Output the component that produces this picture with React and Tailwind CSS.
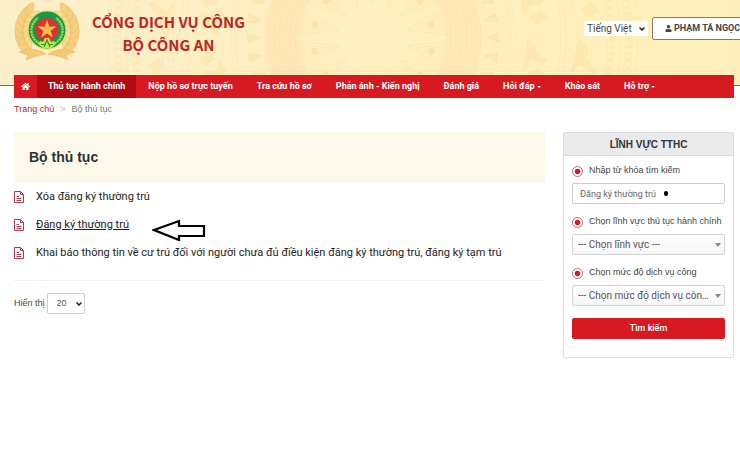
import { FaHome, FaUser } from "react-icons/fa";

const navItems = [
  { label: "Thủ tục hành chính", active: true },
  { label: "Nộp hồ sơ trực tuyến" },
  { label: "Tra cứu hồ sơ" },
  { label: "Phản ánh - Kiến nghị" },
  { label: "Đánh giá" },
  { label: "Hỏi đáp", menu: true },
  { label: "Khảo sát" },
  { label: "Hỗ trợ", menu: true },
];

const procedures = [
  { title: "Xóa đăng ký thường trú" },
  { title: "Đăng ký thường trú", current: true },
  { title: "Khai báo thông tin về cư trú đối với người chưa đủ điều kiện đăng ký thường trú, đăng ký tạm trú" },
];

const rays = Array.from({ length: 14 }, (_, i) => (i * 360) / 14 + 360 / 28);
const birds = Array.from({ length: 18 }, (_, i) => i * 20 + 6);
const feathers = Array.from({ length: 40 }, (_, i) => i * 9);
const leaves = [0, 1, 2, 3, 4, 5, 6];

// Bronze drum pattern behind the header
function DrumPattern() {
  return (
    <svg
      className="absolute inset-0 h-full w-full"
      viewBox="0 0 740 85"
      preserveAspectRatio="xMidYMid slice"
      fill="none"
      aria-hidden="true"
    >
      <g transform="translate(373 38)" stroke="#f6d392" strokeOpacity="0.3">
        <circle r="91" stroke="#fee3ad" strokeOpacity="0.6" strokeWidth="34" />
        {[74, 78, 83, 88, 94, 99, 104, 108].map((r) => (
          <circle key={r} r={r} strokeWidth="0.6" />
        ))}
        {rays.map((a) => (
          <g key={a} transform={`rotate(${a})`}>
            <path d="M35 0 L72 -13 V13 Z" strokeWidth="0.9" />
            <path d="M44 0 L70 -9 V9 Z M52 0 L67 -6 V6 Z" strokeWidth="0.8" />
            <circle cx="60" r="3" fill="#f6d392" fillOpacity="0.4" />
          </g>
        ))}
        {feathers.map((a) => (
          <path key={a} d="M113 0 l12 -5 1 9 z" transform={`rotate(${a})`} fill="#fbdc9c" fillOpacity="0.4" />
        ))}
        {[138, 142, 188, 193, 235, 241, 247, 253, 259, 265].map((r) => (
          <circle key={r} r={r} strokeWidth="0.7" />
        ))}
        {birds.map((a) => (
          <g key={a} transform={`rotate(${a})`} fill="#fbdc9c" fillOpacity="0.35" strokeWidth="0.6">
            <path d="M154 -14 q10 2 9 12 l12 6 -4 4 -11 -3 -6 9 -3 -8 4 -9 z" />
            <path d="M205 -20 q14 8 8 18 l14 12 -5 3 -13 -9 -8 10 1 -15 z" />
            <path d="M158 18 l12 -4 4 8 -10 5 z" />
            <path d="M210 22 l10 -4 5 10 -12 4 z" />
          </g>
        ))}
        <circle r="256" strokeWidth="3" strokeDasharray="3 4" />
        <circle r="238" strokeWidth="3" strokeDasharray="3 4" />
      </g>
    </svg>
  );
}

function Emblem() {
  const branch = (
    <g stroke="#e8b65f" strokeWidth="0.5">
      <path d="M24 53 C6 46 4 28 12 12" fill="none" stroke="#efc272" strokeWidth="4" />
      {leaves.map((i) => (
        <g key={i} transform={`rotate(${i * 14 - 42} 33 29) translate(7 29)`}>
          <path d="M1 2 C-7 -1 -7 -7 -3 -12 C2 -8 4 -4 1 2Z" fill="#f6cf7e" />
          <path d="M2 2 C2 -5 5 -9 8 -10 C9 -4 7 0 2 2Z" fill="#f8dc98" />
        </g>
      ))}
      <path d="M5 50 C14 45 24 47 32 52 L22 54 L12 58 L14 53 Z" fill="#f4c974" />
    </g>
  );
  return (
    <svg viewBox="0 0 66 60" className="h-[60px] w-[66px] shrink-0 overflow-visible" role="img" aria-label="Bộ Công An">
      {branch}
      <g transform="translate(66 0) scale(-1 1)">{branch}</g>
      <circle cx="33" cy="28" r="19" fill="#149a4c" stroke="#eddc45" strokeWidth="1.2" />
      <path d="M28 42.5 A14.8 14.8 0 0 1 24 16 M38 42.5 A14.8 14.8 0 0 0 42 16" fill="none" stroke="#b5d54a" strokeWidth="2.4" strokeDasharray="2 0.7" />
      <circle cx="33" cy="27.5" r="11.5" fill="#e03030" />
      <path d="M33 18 L35.3 24.6 H42.3 L36.7 28.7 L38.8 35.5 L33 31.4 L27.2 35.5 L29.3 28.7 L23.7 24.6 H30.7Z" fill="#f9c04a" />
      <path d="M25 43 L26 39 L29 40 L31 36 H35 L37 40 L40 39 L41 43 L37 46 H29Z" fill="#d8e23d" />
      <path d="M30 45 L33 38 L36 45 M27 42.5 H31 M35 42.5 H39" fill="none" stroke="#169c4c" strokeWidth="1.2" />
    </svg>
  );
}

function FileIcon() {
  return (
    <svg viewBox="0 0 10 12" className="h-3 w-[10px] shrink-0" fill="none" stroke="#b03a48" aria-hidden="true">
      <path d="M0.5 0.5 H6.5 L9.5 3.5 V11.5 H0.5 Z M6.5 0.5 V3.5 H9.5" />
      <path d="M2.5 5.5 H5 M2.5 7.5 H7.5 M2.5 9.5 H7.5" />
    </svg>
  );
}

function Chevron({ className }) {
  return (
    <svg viewBox="0 0 6 4" className={`pointer-events-none h-1 w-[6px] ${className}`} fill="none" stroke="#222" strokeWidth="1.5" aria-hidden="true">
      <path d="M0.5 0.5 L3 3 L5.5 0.5" />
    </svg>
  );
}

function FieldLabel({ htmlFor, children }) {
  return (
    <label htmlFor={htmlFor} className="flex h-5 items-center gap-[6px] text-[9px] whitespace-nowrap text-[#444]">
      <svg viewBox="0 0 11 11" className="h-[11px] w-[11px] shrink-0" aria-hidden="true">
        <circle cx="5.5" cy="5.5" r="5" fill="#fff" stroke="#c9545c" strokeWidth="0.9" />
        <circle cx="5.5" cy="5.5" r="2.7" fill="#cb1c25" />
      </svg>
      {children}
    </label>
  );
}

function SearchSelect({ id, text }) {
  return (
    <div className="grid items-center">
      <select
        id={id}
        className="col-start-1 row-start-1 h-[21px] w-full appearance-none truncate rounded-[2px] border border-[#d3d3d3] bg-linear-to-b from-white to-[#f6f6f6] pr-3 pl-[5px] font-['Roboto',sans-serif] text-[10px] text-[#555]"
      >
        <option>{text}</option>
      </select>
      <span className="pointer-events-none col-start-1 row-start-1 mr-1 justify-self-end border-x-3 border-t-4 border-x-transparent border-t-[#888]" />
    </div>
  );
}

export default function App() {
  return (
    <div className="min-h-screen overflow-x-hidden bg-white font-['Liberation_Sans',Arial,sans-serif] text-[#333]">
      <header className="relative h-[86px] overflow-hidden border-b border-[#c9443e] bg-linear-to-r from-[#fceec9] via-[#feefbf] to-[#feefba]">
        <DrumPattern />
        <div className="relative flex items-start pl-[14px]">
          <div className="flex pt-[2px]">
            <Emblem />
            <h1 className="ml-3 pt-2 text-center font-['Noto_Sans_CJK_SC','Open_Sans',sans-serif] text-[15px] leading-[23px] font-bold whitespace-nowrap text-[#c02425]">
              CỔNG DỊCH VỤ CÔNG
              <br />
              BỘ CÔNG AN
            </h1>
          </div>
          <div className="-mr-4 ml-auto flex shrink-0 items-center gap-1 pt-[17px]">
            <div className="grid items-center">
              <select aria-label="Ngôn ngữ" className="col-start-1 row-start-1 h-[15px] w-16 appearance-none rounded-[2px] bg-white pl-[3px] font-['Roboto',sans-serif] text-[10px] leading-[15px] text-[#444]">
                <option>Tiếng Việt</option>
              </select>
              <Chevron className="col-start-1 row-start-1 mr-[3px] justify-self-end" />
            </div>
            <button type="button" className="flex h-[23px] w-[104px] items-center gap-[2px] rounded-[2px] border border-[#a86f62] bg-white pl-3 font-['Roboto',sans-serif] text-[9px] font-bold whitespace-nowrap text-[#444]">
              <FaUser className="h-[7px] w-[7px] shrink-0" />
              PHẠM TÁ NGỌC
            </button>
          </div>
        </div>
      </header>

      <div className="relative -mt-[11px] pr-[6px] pl-[14px]">
        <nav className="flex h-[23px] items-stretch bg-[#d71a21] font-['Roboto',sans-serif] text-[9px] font-bold whitespace-nowrap text-white">
          <a href="#" aria-label="Trang chủ" className="flex w-[23px] items-center justify-center">
            <FaHome className="h-[9px] w-[9px]" />
          </a>
          {navItems.map((item) => (
            <a
              key={item.label}
              href="#"
              className={`flex items-center gap-[2px] ${item.active ? "bg-[#b20b11] px-[11px]" : "px-3"}`}
            >
              {item.label}
              {item.menu && <span className="border-x-2 border-t-2 border-x-transparent border-t-white" />}
            </a>
          ))}
        </nav>

        <div className="mt-1 flex h-4 items-center gap-[6px] text-[9px]">
          <a href="#" className="text-[#a82e34]">Trang chủ</a>
          <span className="text-[#bbb]">&gt;</span>
          <span className="text-[#777]">Bộ thủ tục</span>
        </div>

        <div className="mt-[14px] flex items-start gap-[18px]">
          <main className="min-w-0 flex-1">
            <h2 className="flex h-[51px] items-center bg-[#fdf9ea] px-[15px] text-[14px] font-bold text-[#28323d]">
              Bộ thủ tục
            </h2>
            <ul className="border-b border-[#f1f1f1] pb-[13px] font-['Roboto',sans-serif] text-[11px] text-[#222]">
              {procedures.map((p) => (
                <li key={p.title} className="flex h-7 items-center gap-3">
                  <FileIcon />
                  <a href="#" className={p.current ? "underline" : ""}>{p.title}</a>
                  {p.current && (
                    <svg viewBox="0 0 54 22" className="relative top-[5px] ml-[11px] h-[22px] w-[54px] shrink-0" aria-hidden="true">
                      <path d="M2 11 L27 2 V7 H52 V17 H27 V21 Z" fill="#fff" stroke="#000" strokeWidth="2.2" />
                    </svg>
                  )}
                </li>
              ))}
            </ul>
            <div className="mt-3 flex items-center gap-[2px] text-[9px]">
              <label htmlFor="page-size" className="text-[#444]">Hiển thị</label>
              <div className="grid items-center">
                <select id="page-size" className="col-start-1 row-start-1 h-[21px] w-[38px] appearance-none rounded-[2px] border border-[#ccc] bg-white pl-[9px] text-[9px] text-[#555]">
                  <option>20</option>
                </select>
                <Chevron className="col-start-1 row-start-1 mr-[3px] justify-self-end" />
              </div>
            </div>
          </main>

          <aside className="w-[171px] shrink-0 rounded-[2px] border border-[#ddd] bg-white">
            <h2 className="flex h-[23px] items-center justify-center border-b border-[#ddd] bg-[#e9eaeb] text-[10px] font-bold text-[#333]">
              LĨNH VỰC TTHC
            </h2>
            <form className="px-2 pt-[5px] pb-[18px]" onSubmit={(e) => e.preventDefault()}>
              <FieldLabel htmlFor="keyword">Nhập từ khóa tìm kiếm</FieldLabel>
              <div className="mt-[2px] mb-2 grid items-center">
                <input
                  id="keyword"
                  defaultValue="Đăng ký thường trú"
                  className="col-start-1 row-start-1 h-[21px] w-full rounded-[2px] border border-[#ccc] bg-white px-[7px] font-['Roboto',sans-serif] text-[9px] text-[#666]"
                />
                <span className="pointer-events-none col-start-1 row-start-1 ml-[92px] h-[5px] w-1 rounded-full bg-black" />
              </div>
              <FieldLabel htmlFor="field">Chọn lĩnh vực thủ tục hành chính</FieldLabel>
              <div className="mt-[2px] mb-2">
                <SearchSelect id="field" text="--- Chọn lĩnh vực ---" />
              </div>
              <FieldLabel htmlFor="level">Chọn mức độ dịch vụ công</FieldLabel>
              <div className="mt-[2px] mb-3">
                <SearchSelect id="level" text="--- Chọn mức độ dịch vụ công ---" />
              </div>
              <button type="submit" className="block h-[21px] w-full rounded-[2px] bg-[#d71a21] font-['Roboto',sans-serif] text-[9px] font-medium text-white">
                Tìm kiếm
              </button>
            </form>
          </aside>
        </div>
      </div>
    </div>
  );
}
